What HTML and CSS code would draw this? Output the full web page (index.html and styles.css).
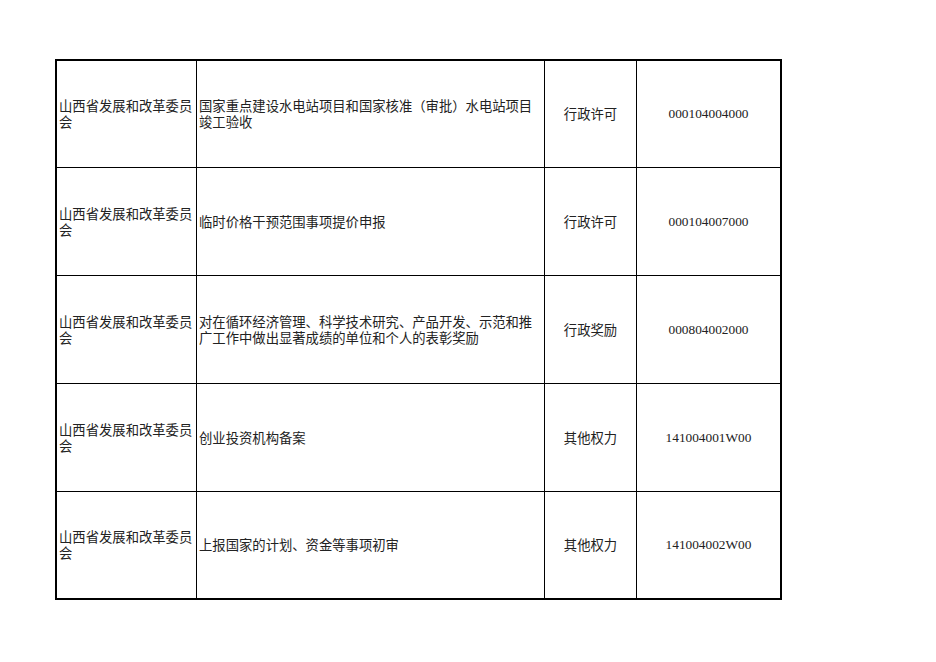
FILE: index.html
```
<!DOCTYPE html>
<html lang="zh-CN">
<head>
<meta charset="utf-8">
<link rel="stylesheet" href="styles.css">
</head>
<body>
<div class="sheet">
  <div class="grid">
    <div class="cell c1 r1">山西省发展和改革委员会</div>
    <div class="cell c2 r1">国家重点建设水电站项目和国家核准（审批）水电站项目竣工验收</div>
    <div class="cell c3 r1">行政许可</div>
    <div class="cell c4 r1 num">000104004000</div>

    <div class="cell c1">山西省发展和改革委员会</div>
    <div class="cell c2">临时价格干预范围事项提价申报</div>
    <div class="cell c3">行政许可</div>
    <div class="cell c4 num">000104007000</div>

    <div class="cell c1">山西省发展和改革委员会</div>
    <div class="cell c2">对在循环经济管理、科学技术研究、产品开发、示范和推<br>广工作中做出显著成绩的单位和个人的表彰奖励</div>
    <div class="cell c3">行政奖励</div>
    <div class="cell c4 num">000804002000</div>

    <div class="cell c1">山西省发展和改革委员会</div>
    <div class="cell c2">创业投资机构备案</div>
    <div class="cell c3">其他权力</div>
    <div class="cell c4 num">141004001W00</div>

    <div class="cell c1 last">山西省发展和改革委员会</div>
    <div class="cell c2 last">上报国家的计划、资金等事项初审</div>
    <div class="cell c3 last">其他权力</div>
    <div class="cell c4 last num">141004002W00</div>
  </div>
</div>
</body>
</html>
```
FILE: styles.css
```
html, body {
  margin: 0;
  padding: 0;
  background: #ffffff;
}
body {
  font-family: "Noto Sans CJK SC", "Noto Sans CJK JP", sans-serif;
  font-size: 13.33px;
  color: #222222;
}
.sheet {
  margin: 59px 0 0 55px;
  width: 723px;
  border: 2px solid #000000;
}
.grid {
  display: grid;
  grid-template-columns: 140px 348px 92px 143px;
  grid-template-rows: 107px 108px 108px 108px 106px;
}
.cell {
  box-sizing: border-box;
  border-right: 1px solid #000000;
  border-bottom: 1px solid #000000;
  display: flex;
  align-items: center;
  line-height: 16px;
  overflow: hidden;
}
.c1 {
  padding: 0 1px 0 2px;
}
.c2 {
  padding: 0 4px 0 2px;
}
.c3 {
  justify-content: center;
  text-align: center;
}
.c4 {
  justify-content: center;
  text-align: center;
  border-right: none;
}
.last {
  border-bottom: none;
}
.num {
  font-family: "Liberation Serif", "DejaVu Serif", serif;
  font-size: 13.33px;
}
```
